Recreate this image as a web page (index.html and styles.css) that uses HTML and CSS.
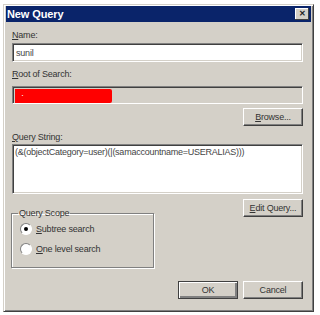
FILE: index.html
```html
<!DOCTYPE html>
<html lang="en">
  <head>
    <meta charset="UTF-8" />
    <title>New Query</title>
    <link rel="stylesheet" href="styles.css">
  </head>
  <body>
    <div class="window">
      <div class="title-bar">
        <span class="title">New Query</span>
        <span class="close-btn">&#x2715;</span>
      </div>

      <div class="content">
        <label class="label"><u>N</u>ame:</label>
        <div class="field name-field">sunil</div>

        <label class="label root-label"><u>R</u>oot of Search:</label>
        <div class="field root-field"><div class="redacted">&middot;</div></div>

        <div class="btn-row">
          <button class="btn"><u>B</u>rowse...</button>
        </div>

        <label class="label query-label"><u>Q</u>uery String:</label>
        <div class="field query-field">(&amp;(objectCategory=user)(|(samaccountname=USERALIAS)))</div>

        <div class="scope-row">
          <fieldset class="scope">
            <legend>Query Scope</legend>
            <div class="radio-row">
              <span class="radio checked"></span>
              <span><u>S</u>ubtree search</span>
            </div>
            <div class="radio-row">
              <span class="radio"></span>
              <span><u>O</u>ne level search</span>
            </div>
          </fieldset>
          <button class="btn edit-btn"><u>E</u>dit Query...</button>
        </div>

        <div class="footer">
          <button class="btn default-btn">OK</button>
          <button class="btn">Cancel</button>
        </div>
      </div>
    </div>
  </body>
</html>
```

FILE: styles.css
```css
* {
  margin: 0;
  padding: 0;
  box-sizing: border-box;
}

body {
  background: #ffffff;
  font-family: "Liberation Sans", Arial, sans-serif;
  font-size: 9px;
  letter-spacing: -0.2px;
  color: #000000;
  padding: 4px 0 0 3px;
}

.window {
  width: 311px;
  height: 308px;
  background: #d4d0c8;
  border: 1px solid;
  border-color: #d4d0c8 #404040 #404040 #d4d0c8;
  box-shadow: inset 1px 1px 0 #ffffff, inset -1px -1px 0 #808080;
  padding: 1px 2px 2px 2px;
  display: flex;
  flex-direction: column;
}

.title-bar {
  height: 16px;
  background: #0a246a;
  color: #ffffff;
  display: flex;
  align-items: center;
  justify-content: space-between;
  padding: 0 2px 0 1px;
}

.title {
  font-weight: bold;
  font-size: 11px;
  letter-spacing: -0.1px;
}

.close-btn {
  width: 14px;
  height: 12px;
  background: #d4d0c8;
  color: #222222;
  font-size: 8px;
  font-weight: bold;
  line-height: 12px;
  text-align: center;
  box-shadow: inset -1px -1px 0 #404040, inset 1px 1px 0 #ffffff;
}

.content {
  padding: 8px 8px 0 6px;
  display: flex;
  flex-direction: column;
  flex: 1;
}

.label {
  display: block;
  height: 11px;
  line-height: 11px;
  color: #333333;
}

.field {
  margin-top: 2px;
  border: 1px solid;
  border-color: #808080 #ffffff #ffffff #808080;
  box-shadow: inset 1px 1px 0 #404040, inset -1px -1px 0 #d4d0c8;
  background: #ffffff;
  padding: 2px 3px;
  color: #444444;
}

.name-field {
  height: 19px;
  line-height: 14px;
}

.root-label {
  margin-top: 7px;
}

.root-field {
  margin-top: 6px;
  height: 18px;
  background: #d4d0c8;
  padding: 2px;
}

.redacted {
  width: 97px;
  height: 14px;
  background: #ff0000;
  border-radius: 0 2px 2px 0;
  color: #ffffff;
  padding-left: 6px;
  line-height: 12px;
}

.btn-row {
  display: flex;
  justify-content: flex-end;
  margin-top: 4px;
}

.btn {
  width: 60px;
  height: 18px;
  background: #d4d0c8;
  border: 1px solid;
  border-color: #ffffff #404040 #404040 #ffffff;
  box-shadow: inset -1px -1px 0 #808080;
  font-family: "Liberation Sans", Arial, sans-serif;
  font-size: 9px;
  letter-spacing: -0.2px;
  white-space: nowrap;
  color: #333333;
}

.query-label {
  margin-top: 6px;
}

.query-field {
  margin-top: 1px;
  height: 50px;
  padding: 2px 2px;
  letter-spacing: -0.25px;
  line-height: 11px;
}

.scope-row {
  display: flex;
  justify-content: space-between;
  align-items: flex-start;
}

.scope {
  width: 143px;
  height: 60px;
  margin-top: 14px;
  margin-left: -1px;
  border: 1px solid #808080;
  box-shadow: 1px 1px 0 #ffffff, inset 1px 1px 0 #ffffff;
  padding: 0 0 0 8px;
}

.scope legend {
  padding: 0 1px;
  margin-left: -2px;
  line-height: 11px;
  color: #333333;
}

.edit-btn {
  margin-top: 5px;
}

.radio-row {
  display: flex;
  align-items: center;
  height: 12px;
  gap: 4px;
  margin-top: 4px;
  color: #333333;
}

.radio-row + .radio-row {
  margin-top: 8px;
}

.radio {
  width: 12px;
  height: 12px;
  border-radius: 50%;
  background: #ffffff;
  border: 1px solid;
  border-color: #808080 #ffffff #ffffff #808080;
  display: flex;
  align-items: center;
  justify-content: center;
}

.radio.checked::after {
  content: "";
  width: 4px;
  height: 4px;
  border-radius: 50%;
  background: #000000;
}

.footer {
  display: flex;
  justify-content: flex-end;
  gap: 5px;
  margin-top: 13px;
}

.default-btn {
  border-color: #404040;
  box-shadow: inset 1px 1px 0 #ffffff, inset -2px -2px 0 #808080;
}
```
